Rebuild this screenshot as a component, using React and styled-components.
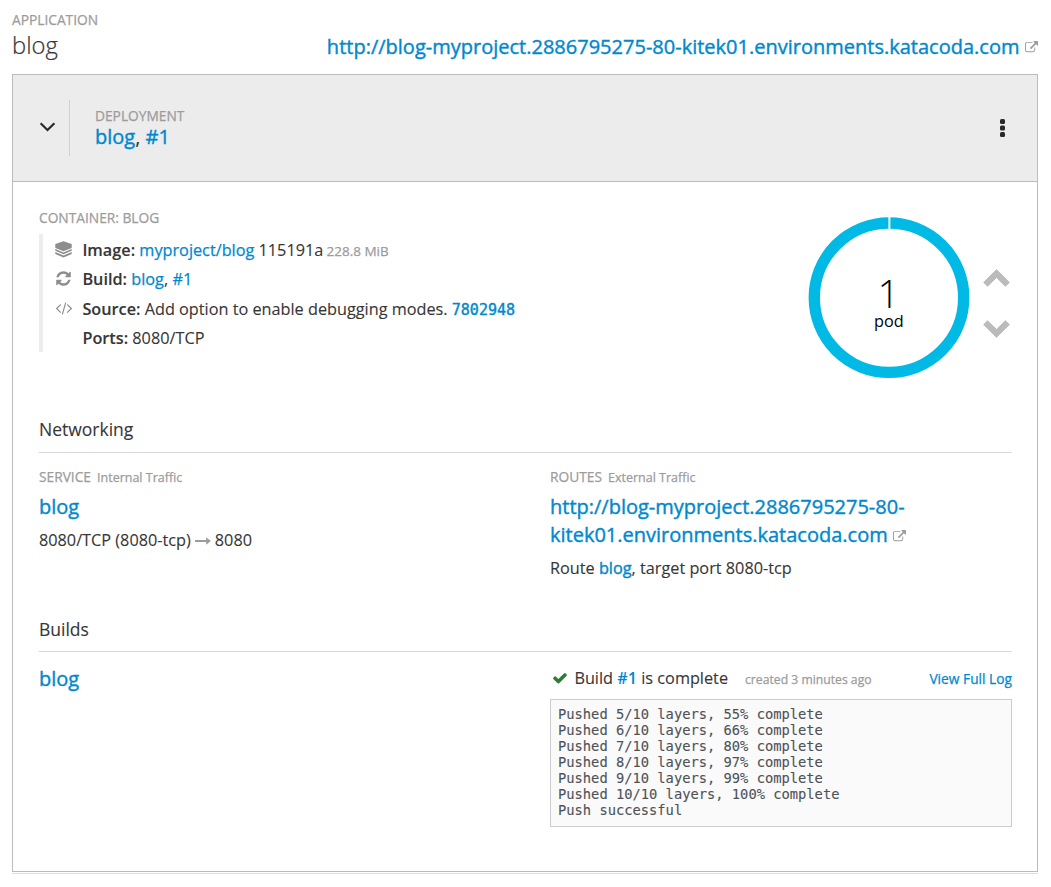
import React from "react";
import styled, { createGlobalStyle } from "styled-components";

const GlobalStyle = createGlobalStyle`
  * { box-sizing: border-box; }
  body {
    margin: 0;
    background: #fff;
    color: #363636;
    font-family: "Open Sans", sans-serif;
    font-size: 16.25px;
    line-height: 29.4px;
    -webkit-text-stroke: 0.1px;
  }
  svg { display: block; }
`;

const Page = styled.main`
  width: 1051px;
  height: 887px;
  padding: 10px 13px 0 12px;
  overflow: hidden;
`;

const Label = styled.span`
  display: block;
  font-size: 13.75px;
  line-height: 20px;
  color: #9c9c9c;
  -webkit-text-stroke: 0.25px #9c9c9c;
  text-transform: uppercase;
  white-space: nowrap;
`;

const Note = styled.span`
  font-size: ${(p) => p.$size || "12.5px"};
  color: #9c9c9c;
  -webkit-text-stroke: 0.25px #9c9c9c;
  text-transform: none;
  white-space: nowrap;
  margin-left: ${(p) => p.$gap || 0};
`;

const Link = styled.a`
  color: #0088ce;
  font-weight: ${(p) => p.$weight || 400};
  -webkit-text-stroke: ${(p) => p.$stroke || "0.4px"} #0088ce;
`;

const AppHeader = styled.header`
  display: flex;
  justify-content: space-between;
  height: 64px;
`;

const AppName = styled.h1`
  margin: 0;
  font-size: 23.75px;
  font-weight: 300;
  line-height: 30px;
  -webkit-text-stroke: 0.2px #363636;
`;

const AppRoute = styled.div`
  display: flex;
  align-items: center;
  gap: 5.5px;
  height: 28px;
  margin-top: 23px;
  font-size: 20px;
  letter-spacing: 0.005px;
  white-space: nowrap;
`;

const Panel = styled.section`
  height: 798px;
  border: 1px solid #bbb;
  box-shadow: 0 1px 0 #fff, 0 2px 0 #ddd;
`;

const PanelHeader = styled.div`
  display: flex;
  align-items: center;
  height: 107px;
  padding: 0 32px 0 26px;
  background: #ececec;
  border-bottom: 1px solid #bbb;
`;

const Toggle = styled.div`
  display: flex;
  align-items: center;
  width: 31px;
  height: 56px;
  padding-bottom: 2px;
  border-right: 1px solid #d1d1d1;
`;

const Deployment = styled.div`
  flex: 1;
  padding: 0 0 3px 25px;
`;

const Title = styled.div`
  font-size: 20px;
  line-height: ${(p) => p.$line || "30px"};
  white-space: nowrap;
`;

const PanelBody = styled.div`
  padding: 26px 25px 0 26px;
`;

const Overview = styled.div`
  display: flex;
  justify-content: space-between;
  height: 207px;
`;

const Details = styled.ul`
  list-style: none;
  margin: 6px 0 0;
  padding: 0 0 0 11px;
  height: 118px;
  border-left: 4px solid #ededed;
`;

const Detail = styled.li`
  display: flex;
  height: 29.4px;
  padding-top: 2px;
  white-space: nowrap;
`;

const DetailIcon = styled.span`
  display: flex;
  align-items: center;
  justify-content: center;
  width: 19px;
  height: 27px;
  margin-right: 9.4px;
`;

const Strong = styled.b`
  font-weight: 600;
`;

const Commit = styled.span`
  font-family: "DejaVu Sans Mono", monospace;
  font-size: 15px;
`;

const Pods = styled.div`
  display: flex;
  gap: 13.5px;
  padding-top: 9px;
`;

const Scaler = styled.div`
  display: flex;
  flex-direction: column;
  gap: 33px;
  padding: 52px 2px 0 0;
`;

const Section = styled.section`
  height: ${(p) => p.$height};
`;

const SectionTitle = styled.h2`
  margin: 0;
  height: 38px;
  border-bottom: 1px solid #d9d9d9;
  font-size: 17.5px;
  font-weight: 400;
  line-height: ${(p) => p.$line || "30px"};
`;

const Columns = styled.div`
  display: grid;
  grid-template-columns: 511px 462px;
  padding-top: ${(p) => p.$top};
`;

const TrafficLine = styled.div`
  display: flex;
  align-items: center;
  gap: ${(p) => p.$gap || 0};
  margin-top: 5px;
  white-space: nowrap;
`;

const RouteUrl = styled.div`
  margin-top: 5px;
  font-size: 20px;
  line-height: 28px;
`;

const InlineIcon = styled.span`
  display: inline-block;
  margin-left: 5px;
  vertical-align: -1px;
`;

const BuildStatus = styled.div`
  display: flex;
  align-items: center;
  height: 27px;
  padding-top: 1px;
  white-space: nowrap;
`;

const StatusText = styled.span`
  padding-top: 2px;
`;

const StatusIcon = styled.span`
  margin: 0 6.4px 0 2px;
`;

const LogLink = styled.span`
  margin-left: auto;
  padding-top: 1px;
  font-size: 13.75px;
`;

const CreatedAt = styled(Note)`
  padding-top: 3px;
`;

const Log = styled.pre`
  margin: 8px 0 0;
  height: 128px;
  padding: 6px 7px;
  border: 1px solid #ccc;
  background: #fafafa;
  color: #4d5258;
  font-family: "DejaVu Sans Mono", monospace;
  font-size: 13.75px;
  line-height: 16px;
`;

const ExternalIcon = () => (
  <svg width="13" height="13" viewBox="0 0 1792 1792" fill="#9c9c9c">
    <path d="M1408 928v320q0 119-84.5 203.5t-203.5 84.5h-832q-119 0-203.5-84.5t-84.5-203.5v-832q0-119 84.5-203.5t203.5-84.5h704q14 0 23 9t9 23v64q0 14-9 23t-23 9h-704q-66 0-113 47t-47 113v832q0 66 47 113t113 47h832q66 0 113-47t47-113v-320q0-14 9-23t23-9h64q14 0 23 9t9 23zm384-864v512q0 26-19 45t-45 19-45-19l-176-176-652 652q-10 10-23 10t-23-10l-114-114q-10-10-10-23t10-23l652-652-176-176q-19-19-19-45t19-45 45-19h512q26 0 45 19t19 45z" />
  </svg>
);

const LayersIcon = () => (
  <svg width="17" height="17" viewBox="0 0 17 17" fill="#8b8d8f">
    <path d="M8.5 0.2L16.7 2.9V6.9L8.5 10.3L0.3 6.9V2.9Z" />
    <path d="M0.3 8.1L8.5 11.5L16.7 8.1V9.8L8.5 13.3L0.3 9.8Z" />
    <path d="M0.3 11L8.5 14.5L16.7 11V13L8.5 16.6L0.3 13Z" />
  </svg>
);

const RefreshIcon = () => (
  <svg width="17" height="17" viewBox="0 0 1792 1792" fill="#8b8d8f">
    <path d="M1639 1056q0 5-1 7-64 268-268 434.5t-478 166.5q-146 0-282.5-55t-243.5-157l-129 129q-19 19-45 19t-45-19-19-45v-448q0-26 19-45t45-19h448q26 0 45 19t19 45-19 45l-137 137q71 66 161 102t187 36q134 0 250-65t186-179q11-17 53-117 8-23 30-23h192q13 0 22.5 9.5t9.5 22.5zm25-800v448q0 26-19 45t-45 19h-448q-26 0-45-19t-19-45 19-45l138-138q-148-137-349-137-134 0-250 65t-186 179q-11 17-53 117-8 23-30 23h-199q-13 0-22.5-9.5t-9.5-22.5v-7q65-268 270-434.5t480-166.5q146 0 284 55.5t245 156.5l130-129q19-19 45-19t45 19 19 45z" />
  </svg>
);

const CodeIcon = () => (
  <svg width="18" height="16" viewBox="0 0 2048 1792" fill="#8b8d8f">
    <path d="M681 1399l-50 50q-10 10-23 10t-23-10l-466-466q-10-10-10-23t10-23l466-466q10-10 23-10t23 10l50 50q10 10 10 23t-10 23l-393 393 393 393q10 10 10 23t-10 23zm591-1067l-373 1291q-4 13-15.5 19.5t-23.5 2.5l-62-17q-13-4-19.5-15.5t-2.5-24.5l373-1291q4-13 15.5-19.5t23.5-2.5l62 17q13 4 19.5 15.5t2.5 24.5zm657 651l-466 466q-10 10-23 10t-23-10l-50-50q-10-10-10-23t10-23l393-393-393-393q-10-10-10-23t10-23l50-50q10-10 23-10t23 10l466 466q10 10 10 23t-10 23z" />
  </svg>
);

const CheckIcon = () => (
  <svg width="16" height="16" viewBox="0 0 1792 1792" fill="#2d7d35">
    <path d="M1671 566q0 40-28 68l-724 724-136 136q-28 28-68 28t-68-28l-136-136-362-362q-28-28-28-68t28-68l136-136q28-28 68-28t68 28l294 295 656-657q28-28 68-28t68 28l136 136q28 28 28 68z" />
  </svg>
);

const ArrowIcon = () => (
  <svg width="16" height="8" viewBox="0 0 16 8" fill="#9c9c9c">
    <path d="M0 2.9H11.2V0.3L15.8 4L11.2 7.7V5.1H0Z" />
  </svg>
);

const AngleDownIcon = () => (
  <svg width="17" height="10" viewBox="0 0 17 10" fill="none" stroke="#292929" strokeWidth="2.2">
    <path d="M1.6 1.2L8.5 8L15.4 1.2" />
  </svg>
);

const KebabIcon = () => (
  <svg width="5" height="18" viewBox="0 0 5 18" fill="#292929">
    <rect width="5" height="5" rx="1.5" />
    <rect y="6.5" width="5" height="5" rx="1.5" />
    <rect y="13" width="5" height="5" rx="1.5" />
  </svg>
);

const ChevronIcon = ({ d }) => (
  <svg width="27" height="18" viewBox="0 0 27 18" fill="#bbb" stroke="#bbb" strokeWidth="1" strokeLinejoin="round">
    <path d={d} />
  </svg>
);

const PodDonut = () => (
  <svg width="162" height="162" viewBox="0 0 162 162">
    <circle cx="81" cy="80.7" r="74.7" fill="none" stroke="#00b9e4" strokeWidth="11.4" />
    <path d="M81.4 0V13" stroke="#fff" strokeWidth="2" />
    <text x="80.5" y="91" textAnchor="middle" fontSize="38.5" fontWeight="300" fill="#000">1</text>
    <text x="80.8" y="110" textAnchor="middle" fontSize="16.25" fill="#000">pod</text>
  </svg>
);

const LOG = `Pushed 5/10 layers, 55% complete
Pushed 6/10 layers, 66% complete
Pushed 7/10 layers, 80% complete
Pushed 8/10 layers, 97% complete
Pushed 9/10 layers, 99% complete
Pushed 10/10 layers, 100% complete
Push successful`;

export default function App() {
  return (
    <Page>
      <GlobalStyle />
      <AppHeader>
        <div>
          <Label>Application</Label>
          <AppName>blog</AppName>
        </div>
        <AppRoute>
          <Link>http://blog-myproject.2886795275-80-kitek01.environments.katacoda.com</Link>
          <ExternalIcon />
        </AppRoute>
      </AppHeader>

      <Panel>
        <PanelHeader>
          <Toggle><AngleDownIcon /></Toggle>
          <Deployment>
            <Label>Deployment</Label>
            <Title $line="22px"><Link>blog</Link>, <Link>#1</Link></Title>
          </Deployment>
          <KebabIcon />
        </PanelHeader>

        <PanelBody>
          <Overview>
            <div>
              <Label>Container: blog</Label>
              <Details>
                <Detail>
                  <DetailIcon><LayersIcon /></DetailIcon>
                  <div>
                    <Strong>Image:</Strong> <Link $stroke="0.25px">myproject/blog</Link> 115191a <Note $size="13.5px" $gap="-1px">228.8 MiB</Note>
                  </div>
                </Detail>
                <Detail>
                  <DetailIcon><RefreshIcon /></DetailIcon>
                  <div><Strong>Build:</Strong> <Link $stroke="0.25px">blog</Link>, <Link $stroke="0.25px">#1</Link></div>
                </Detail>
                <Detail>
                  <DetailIcon><CodeIcon /></DetailIcon>
                  <div>
                    <Strong>Source:</Strong> Add option to enable debugging modes. <Commit><Link>7802948</Link></Commit>
                  </div>
                </Detail>
                <Detail>
                  <DetailIcon />
                  <div><Strong>Ports:</Strong> 8080/TCP</div>
                </Detail>
              </Details>
            </div>
            <Pods>
              <PodDonut />
              <Scaler>
                <ChevronIcon d="M13.5 0.7L26.3 13.4L22.4 17.2L13.5 8.4L4.6 17.2L0.7 13.4Z" />
                <ChevronIcon d="M13.5 17.3L26.3 4.6L22.4 0.8L13.5 9.6L4.6 0.8L0.7 4.6Z" />
              </Scaler>
            </Pods>
          </Overview>

          <Section $height="199px">
            <SectionTitle $line="28px">Networking</SectionTitle>
            <Columns $top="14px">
              <div>
                <Label>Service<Note $gap="6px">Internal Traffic</Note></Label>
                <RouteUrl><Link>blog</Link></RouteUrl>
                <TrafficLine $gap="4px">8080/TCP (8080-tcp) <ArrowIcon /> 8080</TrafficLine>
              </div>
              <div>
                <Label>Routes<Note $gap="6px">External Traffic</Note></Label>
                <RouteUrl>
                  <Link>http://blog-myproject.2886795275-80-<br />kitek01.environments.katacoda.com</Link>
                  <InlineIcon><ExternalIcon /></InlineIcon>
                </RouteUrl>
                <TrafficLine><span>Route <Link>blog</Link>, target port 8080-tcp</span></TrafficLine>
              </div>
            </Columns>
          </Section>

          <Section $height="240px">
            <SectionTitle>Builds</SectionTitle>
            <Columns $top="12px">
              <Title><Link>blog</Link></Title>
              <div>
                <BuildStatus>
                  <StatusIcon><CheckIcon /></StatusIcon>
                  <StatusText>Build <Link $weight={600} $stroke="0">#1</Link> is complete</StatusText>
                  <CreatedAt $gap="17px" $size="12.2px">created 3 minutes ago</CreatedAt>
                  <LogLink><Link $stroke="0.25px">View Full Log</Link></LogLink>
                </BuildStatus>
                <Log>{LOG}</Log>
              </div>
            </Columns>
          </Section>
        </PanelBody>
      </Panel>
    </Page>
  );
}
